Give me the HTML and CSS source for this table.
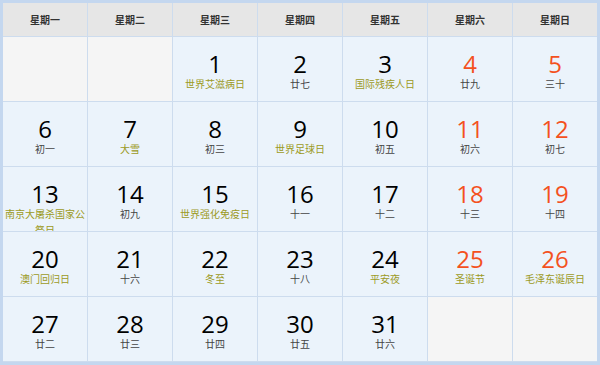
FILE: index.html
```html
<!DOCTYPE html>
<html lang="zh-CN">
<head>
<meta charset="utf-8">
<title>2021年12月</title>
<link rel="stylesheet" href="styles.css">
</head>
<body>
<div class="cal">
  <div class="grid">
    <div class="hd">星期一</div>
    <div class="hd">星期二</div>
    <div class="hd">星期三</div>
    <div class="hd">星期四</div>
    <div class="hd">星期五</div>
    <div class="hd">星期六</div>
    <div class="hd">星期日</div>

    <div class="cell empty"></div>
    <div class="cell empty"></div>
    <div class="cell"><div class="num">1</div><div class="sub fest">世界艾滋病日</div></div>
    <div class="cell"><div class="num">2</div><div class="sub">廿七</div></div>
    <div class="cell"><div class="num">3</div><div class="sub fest">国际残疾人日</div></div>
    <div class="cell"><div class="num we">4</div><div class="sub">廿九</div></div>
    <div class="cell"><div class="num we">5</div><div class="sub">三十</div></div>

    <div class="cell"><div class="num">6</div><div class="sub">初一</div></div>
    <div class="cell"><div class="num">7</div><div class="sub fest">大雪</div></div>
    <div class="cell"><div class="num">8</div><div class="sub">初三</div></div>
    <div class="cell"><div class="num">9</div><div class="sub fest">世界足球日</div></div>
    <div class="cell"><div class="num">10</div><div class="sub">初五</div></div>
    <div class="cell"><div class="num we">11</div><div class="sub">初六</div></div>
    <div class="cell"><div class="num we">12</div><div class="sub">初七</div></div>

    <div class="cell"><div class="num">13</div><div class="sub fest">南京大屠杀国家公祭日</div></div>
    <div class="cell"><div class="num">14</div><div class="sub">初九</div></div>
    <div class="cell"><div class="num">15</div><div class="sub fest">世界强化免疫日</div></div>
    <div class="cell"><div class="num">16</div><div class="sub">十一</div></div>
    <div class="cell"><div class="num">17</div><div class="sub">十二</div></div>
    <div class="cell"><div class="num we">18</div><div class="sub">十三</div></div>
    <div class="cell"><div class="num we">19</div><div class="sub">十四</div></div>

    <div class="cell"><div class="num">20</div><div class="sub fest">澳门回归日</div></div>
    <div class="cell"><div class="num">21</div><div class="sub">十六</div></div>
    <div class="cell"><div class="num">22</div><div class="sub fest">冬至</div></div>
    <div class="cell"><div class="num">23</div><div class="sub">十八</div></div>
    <div class="cell"><div class="num">24</div><div class="sub fest">平安夜</div></div>
    <div class="cell"><div class="num we">25</div><div class="sub fest">圣诞节</div></div>
    <div class="cell"><div class="num we">26</div><div class="sub fest">毛泽东诞辰日</div></div>

    <div class="cell"><div class="num">27</div><div class="sub">廿二</div></div>
    <div class="cell"><div class="num">28</div><div class="sub">廿三</div></div>
    <div class="cell"><div class="num">29</div><div class="sub">廿四</div></div>
    <div class="cell"><div class="num">30</div><div class="sub">廿五</div></div>
    <div class="cell"><div class="num">31</div><div class="sub">廿六</div></div>
    <div class="cell empty"></div>
    <div class="cell empty"></div>
  </div>
</div>
</body>
</html>
```
FILE: styles.css
```css
* { box-sizing: border-box; }
html, body { margin: 0; padding: 0; background: #ffffff; }
body { font-family: "Open Sans", "Noto Sans CJK SC", sans-serif; }

.cal {
  width: 600px;
  height: 365px;
  border: 3px solid #c4d7ef;
  background: #cddcee;
}

.grid {
  display: grid;
  grid-template-columns: repeat(7, 84px);
  grid-template-rows: 33px repeat(5, 64px);
  gap: 1px;
  padding-bottom: 1px;
  background: #cddcee;
}

.hd {
  background: #e6e6e6;
  color: #333333;
  font-family: "Noto Sans CJK SC", sans-serif;
  font-weight: bold;
  font-size: 10px;
  display: flex;
  align-items: center;
  justify-content: center;
}

.cell {
  background: #ebf3fb;
  text-align: center;
  padding-top: 15px;
  overflow: hidden;
}

.cell.empty { background: #f5f5f5; }

.num {
  font-family: "Open Sans", sans-serif;
  font-size: 24px;
  line-height: 24px;
  color: #000000;
}

.num.we { color: #f4511e; }

.sub {
  font-family: "Noto Sans CJK SC", sans-serif;
  font-size: 10px;
  line-height: 16px;
  color: #444444;
  padding: 0 2px;
}

.sub.fest { color: #9c9a1e; }
```
